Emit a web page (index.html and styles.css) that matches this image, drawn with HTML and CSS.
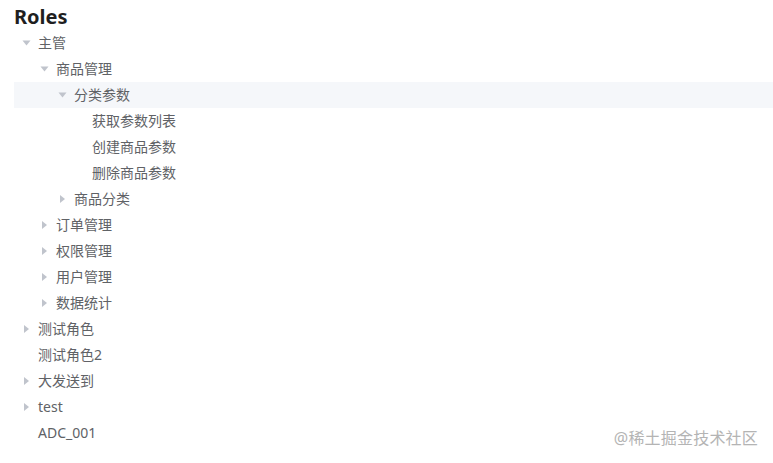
FILE: index.html
```html
<!DOCTYPE html>
<html lang="zh-CN">
<head>
  <meta charset="UTF-8" />
  <title>Roles</title>
  <link rel="stylesheet" href="styles.css">
</head>
<body>
  <h3 class="title">Roles</h3>
  <div class="tree">
    <div class="node lv1"><span class="caret open"></span><span class="label">主管</span></div>
    <div class="node lv2"><span class="caret open"></span><span class="label">商品管理</span></div>
    <div class="node lv3 current"><span class="caret open"></span><span class="label">分类参数</span></div>
    <div class="node lv4"><span class="caret leaf"></span><span class="label">获取参数列表</span></div>
    <div class="node lv4"><span class="caret leaf"></span><span class="label">创建商品参数</span></div>
    <div class="node lv4"><span class="caret leaf"></span><span class="label">删除商品参数</span></div>
    <div class="node lv3"><span class="caret"></span><span class="label">商品分类</span></div>
    <div class="node lv2"><span class="caret"></span><span class="label">订单管理</span></div>
    <div class="node lv2"><span class="caret"></span><span class="label">权限管理</span></div>
    <div class="node lv2"><span class="caret"></span><span class="label">用户管理</span></div>
    <div class="node lv2"><span class="caret"></span><span class="label">数据统计</span></div>
    <div class="node lv1"><span class="caret"></span><span class="label">测试角色</span></div>
    <div class="node lv1"><span class="caret leaf"></span><span class="label">测试角色2</span></div>
    <div class="node lv1"><span class="caret"></span><span class="label">大发送到</span></div>
    <div class="node lv1"><span class="caret"></span><span class="label">test</span></div>
    <div class="node lv1"><span class="caret leaf"></span><span class="label">ADC_001</span></div>
  </div>
  <div class="watermark">@稀土掘金技术社区</div>
</body>
</html>
```

FILE: styles.css
```css
* { box-sizing: border-box; }

body {
  margin: 0;
  padding: 0 0 0 14px;
  font-family: "Noto Sans", "Noto Sans CJK SC", sans-serif;
  background: #ffffff;
  height: 463px;
  position: relative;
  overflow: hidden;
}

.title {
  margin: 5px 0 1px;
  font-size: 20px;
  line-height: 24px;
  font-weight: 700;
  color: #1f1f1f;
}

.tree {
  display: flex;
  flex-direction: column;
}

.node {
  display: flex;
  align-items: center;
  height: 26px;
  font-size: 14px;
  color: #606266;
}

.node.current {
  background: #f5f7fa;
}

.lv2 { padding-left: 18px; }
.lv3 { padding-left: 36px; }
.lv4 { padding-left: 54px; }

.caret {
  width: 24px;
  height: 26px;
  display: flex;
  align-items: center;
  justify-content: center;
  flex-shrink: 0;
}

.caret::before {
  content: "";
  width: 0;
  height: 0;
  border-top: 4px solid transparent;
  border-bottom: 4px solid transparent;
  border-left: 5px solid #c0c4cc;
  margin-left: 1px;
}

.caret.open::before {
  transform: rotate(90deg);
}

.caret.leaf::before {
  border-left-color: transparent;
}

.label {
  line-height: 26px;
  white-space: nowrap;
}

.watermark {
  position: absolute;
  right: 15px;
  bottom: 14px;
  font-size: 16px;
  color: #b4b4b4;
  letter-spacing: 0.2px;
}
```
